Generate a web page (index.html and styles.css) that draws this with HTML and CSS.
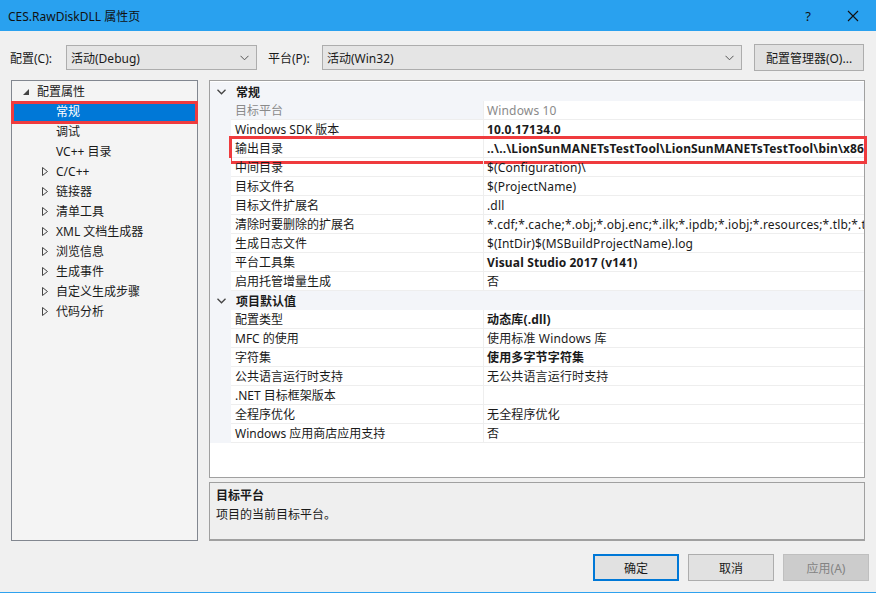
FILE: index.html
```html
<!DOCTYPE html>
<html lang="zh-CN">
<head>
    <meta charset="UTF-8">
    <title>CES.RawDiskDLL 属性页</title>
    <link rel="stylesheet" href="styles.css">
</head>
<body>
<div class="window">
    <div class="titlebar">
        <span class="title">CES.RawDiskDLL 属性页</span>
        <span class="help">?</span>
        <span class="close">
            <svg width="12" height="12" viewBox="0 0 12 12"><path d="M1 1L11 11M11 1L1 11" stroke="#111" stroke-width="1.1"/></svg>
        </span>
    </div>

    <div class="toolbar">
        <label class="tb-label lbl-config">配置(C):</label>
        <div class="combo combo-config">
            <span>活动(Debug)</span>
            <svg class="chev" width="9" height="6" viewBox="0 0 9 6"><path d="M0.5 0.8L4.5 4.8L8.5 0.8" fill="none" stroke="#555" stroke-width="1"/></svg>
        </div>
        <label class="tb-label lbl-platform">平台(P):</label>
        <div class="combo combo-platform">
            <span>活动(Win32)</span>
            <svg class="chev" width="9" height="6" viewBox="0 0 9 6"><path d="M0.5 0.8L4.5 4.8L8.5 0.8" fill="none" stroke="#555" stroke-width="1"/></svg>
        </div>
        <button class="btn btn-manager">配置管理器(O)...</button>
    </div>

    <div class="main">
        <div class="tree">
            <div class="node lvl0">
                <svg class="tw" width="6" height="6" viewBox="0 0 6 6"><path d="M6 0L6 6L0 6Z" fill="#444"/></svg>
                <span>配置属性</span>
            </div>
            <div class="node lvl1 selected"><span>常规</span></div>
            <div class="node lvl1"><span>调试</span></div>
            <div class="node lvl1"><span>VC++ 目录</span></div>
            <div class="node lvl1 has-kids"><svg class="tw" width="6" height="9" viewBox="0 0 6 9"><path d="M0.5 0.5L5.5 4.5L0.5 8.5Z" fill="none" stroke="#444" stroke-width="1"/></svg><span>C/C++</span></div>
            <div class="node lvl1 has-kids"><svg class="tw" width="6" height="9" viewBox="0 0 6 9"><path d="M0.5 0.5L5.5 4.5L0.5 8.5Z" fill="none" stroke="#444" stroke-width="1"/></svg><span>链接器</span></div>
            <div class="node lvl1 has-kids"><svg class="tw" width="6" height="9" viewBox="0 0 6 9"><path d="M0.5 0.5L5.5 4.5L0.5 8.5Z" fill="none" stroke="#444" stroke-width="1"/></svg><span>清单工具</span></div>
            <div class="node lvl1 has-kids"><svg class="tw" width="6" height="9" viewBox="0 0 6 9"><path d="M0.5 0.5L5.5 4.5L0.5 8.5Z" fill="none" stroke="#444" stroke-width="1"/></svg><span>XML 文档生成器</span></div>
            <div class="node lvl1 has-kids"><svg class="tw" width="6" height="9" viewBox="0 0 6 9"><path d="M0.5 0.5L5.5 4.5L0.5 8.5Z" fill="none" stroke="#444" stroke-width="1"/></svg><span>浏览信息</span></div>
            <div class="node lvl1 has-kids"><svg class="tw" width="6" height="9" viewBox="0 0 6 9"><path d="M0.5 0.5L5.5 4.5L0.5 8.5Z" fill="none" stroke="#444" stroke-width="1"/></svg><span>生成事件</span></div>
            <div class="node lvl1 has-kids"><svg class="tw" width="6" height="9" viewBox="0 0 6 9"><path d="M0.5 0.5L5.5 4.5L0.5 8.5Z" fill="none" stroke="#444" stroke-width="1"/></svg><span>自定义生成步骤</span></div>
            <div class="node lvl1 has-kids"><svg class="tw" width="6" height="9" viewBox="0 0 6 9"><path d="M0.5 0.5L5.5 4.5L0.5 8.5Z" fill="none" stroke="#444" stroke-width="1"/></svg><span>代码分析</span></div>
        </div>

        <div class="right">
            <div class="grid">
                <div class="cat">
                    <span class="gut"><svg width="9" height="6" viewBox="0 0 9 6"><path d="M0.5 0.8L4.5 4.8L8.5 0.8" fill="none" stroke="#444" stroke-width="1.3"/></svg></span>
                    <span class="cat-name">常规</span>
                </div>
                <div class="row readonly"><span class="gut"></span><span class="name">目标平台</span><span class="val">Windows 10</span></div>
                <div class="row"><span class="gut"></span><span class="name">Windows SDK 版本</span><span class="val bold">10.0.17134.0</span></div>
                <div class="row marked"><span class="gut"></span><span class="name">输出目录</span><span class="val bold">..\..\LionSunMANETsTestTool\LionSunMANETsTestTool\bin\x86\Debug\</span></div>
                <div class="row"><span class="gut"></span><span class="name">中间目录</span><span class="val">$(Configuration)\</span></div>
                <div class="row"><span class="gut"></span><span class="name">目标文件名</span><span class="val">$(ProjectName)</span></div>
                <div class="row"><span class="gut"></span><span class="name">目标文件扩展名</span><span class="val">.dll</span></div>
                <div class="row"><span class="gut"></span><span class="name">清除时要删除的扩展名</span><span class="val">*.cdf;*.cache;*.obj;*.obj.enc;*.ilk;*.ipdb;*.iobj;*.resources;*.tlb;*.tli;*.tlh;*.tmp</span></div>
                <div class="row"><span class="gut"></span><span class="name">生成日志文件</span><span class="val">$(IntDir)$(MSBuildProjectName).log</span></div>
                <div class="row"><span class="gut"></span><span class="name">平台工具集</span><span class="val bold">Visual Studio 2017 (v141)</span></div>
                <div class="row"><span class="gut"></span><span class="name">启用托管增量生成</span><span class="val">否</span></div>
                <div class="cat">
                    <span class="gut"><svg width="9" height="6" viewBox="0 0 9 6"><path d="M0.5 0.8L4.5 4.8L8.5 0.8" fill="none" stroke="#444" stroke-width="1.3"/></svg></span>
                    <span class="cat-name">项目默认值</span>
                </div>
                <div class="row"><span class="gut"></span><span class="name">配置类型</span><span class="val bold">动态库(.dll)</span></div>
                <div class="row"><span class="gut"></span><span class="name">MFC 的使用</span><span class="val">使用标准 Windows 库</span></div>
                <div class="row"><span class="gut"></span><span class="name">字符集</span><span class="val bold">使用多字节字符集</span></div>
                <div class="row"><span class="gut"></span><span class="name">公共语言运行时支持</span><span class="val">无公共语言运行时支持</span></div>
                <div class="row"><span class="gut"></span><span class="name">.NET 目标框架版本</span><span class="val"></span></div>
                <div class="row"><span class="gut"></span><span class="name">全程序优化</span><span class="val">无全程序优化</span></div>
                <div class="row"><span class="gut"></span><span class="name">Windows 应用商店应用支持</span><span class="val">否</span></div>
            </div>
            <div class="desc">
                <div class="desc-title">目标平台</div>
                <div class="desc-text">项目的当前目标平台。</div>
            </div>
        </div>
    </div>

    <div class="footer">
        <button class="btn btn-ok">确定</button>
        <button class="btn">取消</button>
        <button class="btn btn-disabled">应用(A)</button>
    </div>
</div>
</body>
</html>
```

FILE: styles.css
```css
html, body {
    margin: 0;
    padding: 0;
    background-color: #f0f0f0;
    font-family: "Noto Sans", "Noto Sans CJK SC", sans-serif;
    font-size: 12px;
    color: #1a1a1a;
}
.window {
    width: 876px;
    height: 593px;
    box-sizing: border-box;
    border-bottom: 1px solid #2ea2ef;
    overflow: hidden;
}
.titlebar {
    height: 31px;
    background-color: #29a1ef;
    display: flex;
    align-items: center;
    padding-left: 8px;
}
.title {
    flex: 1;
    color: #111;
    font-size: 12px;
}
.help {
    width: 16px;
    text-align: center;
    font-size: 13px;
    color: #111;
    margin-right: 30px;
}
.close {
    width: 14px;
    display: flex;
    justify-content: center;
    margin-right: 16px;
}

/* toolbar */
.toolbar {
    display: flex;
    align-items: center;
    height: 27px;
    margin-top: 13px;
}
.tb-label {
    box-sizing: border-box;
}
.lbl-config {
    width: 66px;
    padding-left: 10px;
}
.lbl-platform {
    width: 54px;
    margin-left: 11px;
}
.combo {
    box-sizing: border-box;
    height: 25px;
    border: 1px solid #adadad;
    background-color: #e5e5e5;
    display: flex;
    align-items: center;
    justify-content: space-between;
    padding: 0 7px 0 4px;
}
.combo-config {
    width: 191px;
}
.combo-platform {
    width: 420px;
}
.btn {
    box-sizing: border-box;
    height: 27px;
    border: 1px solid #adadad;
    background-color: #e1e1e1;
    font-family: inherit;
    font-size: 12px;
    color: #1a1a1a;
    padding: 0;
}
.btn-manager {
    width: 110px;
    margin-left: 12px;
}

/* main area */
.main {
    display: flex;
    margin: 9px 0 0 11px;
    height: 461px;
}
.tree {
    box-sizing: border-box;
    width: 187px;
    height: 461px;
    border: 1px solid #828790;
    background-color: #f4f4f4;
}
.node {
    height: 20px;
    display: flex;
    align-items: center;
    position: relative;
}
.node .tw {
    position: absolute;
}
.lvl0 {
    padding-left: 25px;
}
.lvl0 .tw {
    left: 11px;
    top: 8px;
}
.lvl1 {
    padding-left: 44px;
}
.lvl1 .tw {
    left: 30px;
    top: 6px;
}
.selected {
    background-color: #0078d7;
    color: #fff;
}
.selected::after {
    content: "";
    position: absolute;
    left: -1px;
    right: -1px;
    top: 0;
    bottom: -3px;
    border: 3px solid #ef3b3e;
}

.right {
    margin-left: 11px;
    width: 656px;
    display: flex;
    flex-direction: column;
}
.grid {
    box-sizing: border-box;
    height: 398px;
    border: 1px solid #a0a0a0;
    background-color: #fff;
    padding-top: 1px;
}
.cat, .row {
    display: flex;
    height: 19px;
    align-items: center;
}
.cat {
    background-color: #f3f5f9;
}
.gut {
    width: 21px;
    height: 100%;
    flex: none;
    background-color: #f3f5f9;
    display: flex;
    align-items: center;
    justify-content: center;
}
.cat .gut {
    padding-left: 1px;
}
.cat-name {
    font-weight: bold;
    padding-left: 4px;
}
.row {
    position: relative;
}
.name {
    box-sizing: border-box;
    width: 252px;
    height: 100%;
    flex: none;
    padding-left: 4px;
    line-height: 19px;
    border-bottom: 1px solid #eeeeee;
    white-space: nowrap;
}
.val {
    box-sizing: border-box;
    flex: 1;
    height: 100%;
    padding-left: 3px;
    line-height: 19px;
    letter-spacing: 0.15px;
    border-left: 1px solid #eeeeee;
    border-bottom: 1px solid #eeeeee;
    white-space: nowrap;
    overflow: hidden;
}
.bold {
    font-weight: bold;
}
.readonly .name {
    background-color: #f3f5f9;
    color: #8a8a8a;
}
.readonly .val {
    color: #8a8a8a;
}
.marked::after {
    content: "";
    position: absolute;
    left: 19px;
    right: -3px;
    top: -3px;
    bottom: -6px;
    border: 3px solid #ef3b3e;
}

.desc {
    box-sizing: border-box;
    margin-top: 4px;
    height: 59px;
    border: 1px solid #a0a0a0;
    border-bottom-width: 2px;
    background-color: #efefef;
    padding: 3px 6px;
}
.desc-title {
    font-weight: bold;
    line-height: 19px;
}
.desc-text {
    line-height: 19px;
}

/* footer */
.footer {
    display: flex;
    justify-content: flex-end;
    gap: 9px;
    margin-top: 13px;
    padding-right: 7px;
}
.footer .btn {
    width: 86px;
}
.btn-ok {
    border: 2px solid #0078d7;
}
.btn-disabled {
    background-color: #cccccc;
    border-color: #bfbfbf;
    color: #838383;
}
```
